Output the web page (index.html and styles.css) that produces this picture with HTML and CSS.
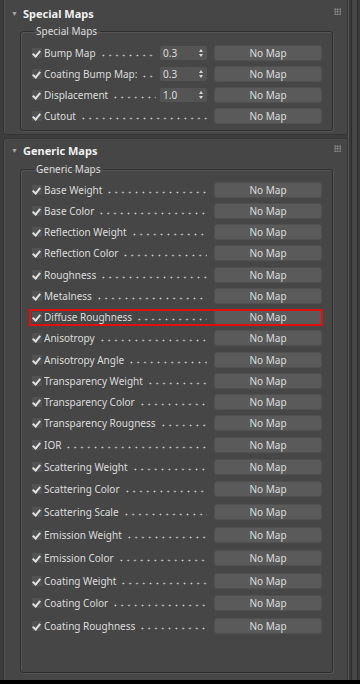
FILE: index.html
```html
<!DOCTYPE html>
<html lang="en">
<head>
    <meta charset="UTF-8">
    <meta name="viewport" content="width=device-width, initial-scale=1.0">
    <title>Material Maps</title>
    <link rel="stylesheet" href="styles.css">
</head>
<body>

<div class="page">
    <div class="rollouts">

        <!-- Special Maps rollout -->
        <div class="rollout special">
            <div class="rollout-head">
                <span class="arrow">&#9660;</span>
                <span class="title">Special Maps</span>
                <span class="grip"></span>
            </div>
            <fieldset class="group">
                <legend>Special Maps</legend>
                <div class="row">
                    <span class="check"></span>
                    <span class="name">Bump Map<span class="dots"></span></span>
                    <span class="spin">0.3<span class="updown"></span></span>
                    <span class="btn">No Map</span>
                </div>
                <div class="row">
                    <span class="check"></span>
                    <span class="name">Coating Bump Map:<span class="dots"></span></span>
                    <span class="spin">0.3<span class="updown"></span></span>
                    <span class="btn">No Map</span>
                </div>
                <div class="row">
                    <span class="check"></span>
                    <span class="name">Displacement<span class="dots"></span></span>
                    <span class="spin">1.0<span class="updown"></span></span>
                    <span class="btn">No Map</span>
                </div>
                <div class="row">
                    <span class="check"></span>
                    <span class="name">Cutout<span class="dots"></span></span>
                    <span class="btn">No Map</span>
                </div>
            </fieldset>
        </div>

        <!-- Generic Maps rollout -->
        <div class="rollout generic">
            <div class="rollout-head">
                <span class="arrow">&#9660;</span>
                <span class="title">Generic Maps</span>
                <span class="grip"></span>
            </div>
            <fieldset class="group">
                <legend>Generic Maps</legend>
                <div id="genericRows"></div>
            </fieldset>
        </div>

    </div>
    <div class="scrollbar"><div class="track"></div></div>
</div>

<script>
    const maps = [
        'Base Weight', 'Base Color', 'Reflection Weight', 'Reflection Color',
        'Roughness', 'Metalness', 'Diffuse Roughness', 'Anisotropy',
        'Anisotropy Angle', 'Transparency Weight', 'Transparency Color',
        'Transparency Rougness', 'IOR', 'Scattering Weight', 'Scattering Color',
        'Scattering Scale', 'Emission Weight', 'Emission Color',
        'Coating Weight', 'Coating Color', 'Coating Roughness'
    ];

    const list = document.getElementById('genericRows');
    maps.forEach((name, i) => {
        const row = document.createElement('div');
        row.className = 'row';
        if (i > 12) row.classList.add('wide');
        if (name === 'Diffuse Roughness') row.classList.add('marked');
        row.innerHTML = `
            <span class="check"></span>
            <span class="name">${name}<span class="dots"></span></span>
            <span class="btn">No Map</span>
        `;
        list.appendChild(row);
    });
</script>

</body>
</html>
```

FILE: styles.css
```css
body {
    margin: 0;
    background: #000;
    font-family: "Noto Sans", "Liberation Sans", sans-serif;
    font-size: 10px;
    color: #dadada;
}

.page {
    display: flex;
    height: 680px;
    background: #3d3d3d;
    overflow: hidden;
}

.rollouts {
    width: 346px;
    padding-left: 3px;
}

.rollout {
    background: #464646;
    border: 1px solid #353535;
    border-radius: 3px;
    box-shadow: inset 1px 1px 0 #505050;
}

.special {
    margin-top: -2px;
    height: 137px;
    box-sizing: border-box;
}

.generic {
    margin-top: 3px;
    height: 600px;
}

.rollout-head {
    display: flex;
    align-items: center;
    height: 22px;
    padding-top: 3px;
    padding-left: 7px;
    padding-right: 6px;
}

.generic .rollout-head {
    padding-top: 0;
}

.arrow {
    font-size: 7px;
    color: #a8a8a8;
    width: 12px;
}

.title {
    font-weight: bold;
    font-size: 11px;
    color: #f0f0f0;
    flex: 1;
}

.grip {
    width: 7px;
    height: 7px;
    background-image: radial-gradient(circle, #8a8a8a 0.8px, transparent 1px);
    background-size: 2.5px 2.5px;
    margin-top: -4px;
}

.group {
    margin: 1px 14px 0 16px;
    padding: 6px 10px 4px 11px;
    border: 1px solid #2f2f2f;
    border-radius: 3px;
    box-shadow: 1px 1px 0 #555, inset 1px 1px 0 #555;
}

.group legend {
    padding: 0 3px 0 2px;
    margin-left: 2px;
    color: #dcdcdc;
    line-height: 12px;
}

.generic .group {
    margin-top: 2px;
    padding-top: 4px;
    padding-bottom: 0;
    height: 510px;
    box-sizing: border-box;
}

.row {
    display: flex;
    align-items: center;
    height: 21.25px;
    position: relative;
}

.row.wide {
    height: 22.8px;
}

.special .row {
    height: 20.8px;
}

.check {
    width: 10px;
    height: 10px;
    margin-right: 2px;
    background: #525252;
    position: relative;
}

.check::after {
    content: "";
    position: absolute;
    left: 2px;
    top: 1px;
    width: 3px;
    height: 6px;
    border: solid #e0e0e0;
    border-width: 0 2px 2px 0;
    transform: rotate(40deg);
}

.name {
    flex: 1;
    display: flex;
    align-items: baseline;
    white-space: nowrap;
    overflow: hidden;
    color: #dcdcdc;
}

.dots {
    flex: 1;
    height: 3px;
    margin-left: 4px;
    background-image: radial-gradient(circle, #d4d4d4 0.8px, transparent 1.1px);
    background-size: 6.8px 3px;
    background-repeat: repeat-x;
}

.spin {
    width: 47px;
    height: 14px;
    box-sizing: border-box;
    margin-left: 4px;
    padding-left: 3px;
    background: #545454;
    border-radius: 2px;
    line-height: 14px;
    color: #dedede;
    position: relative;
}

.updown::before,
.updown::after {
    content: "";
    position: absolute;
    right: 4px;
    border-left: 2.5px solid transparent;
    border-right: 2.5px solid transparent;
}

.updown::before {
    top: 3px;
    border-bottom: 3px solid #d8d8d8;
}

.updown::after {
    bottom: 3px;
    border-top: 3px solid #d8d8d8;
}

.btn {
    width: 108px;
    height: 16px;
    margin-left: 7px;
    box-sizing: border-box;
    background: #5a5a5a;
    border: 1px solid #505050;
    border-radius: 3px;
    text-align: center;
    line-height: 14px;
    color: #dedede;
}

.marked::before {
    content: "";
    position: absolute;
    left: -3px;
    right: -1px;
    top: 2px;
    bottom: 2px;
    border: 2px solid #e30f0f;
}

.scrollbar {
    width: 11px;
    border-left: 1px solid #555;
    background: #3a3a3a;
    display: flex;
    justify-content: center;
}

.track {
    width: 5px;
    border-left: 1px solid #2c2c2c;
    border-right: 1px solid #2c2c2c;
    background: #454545;
}
```
